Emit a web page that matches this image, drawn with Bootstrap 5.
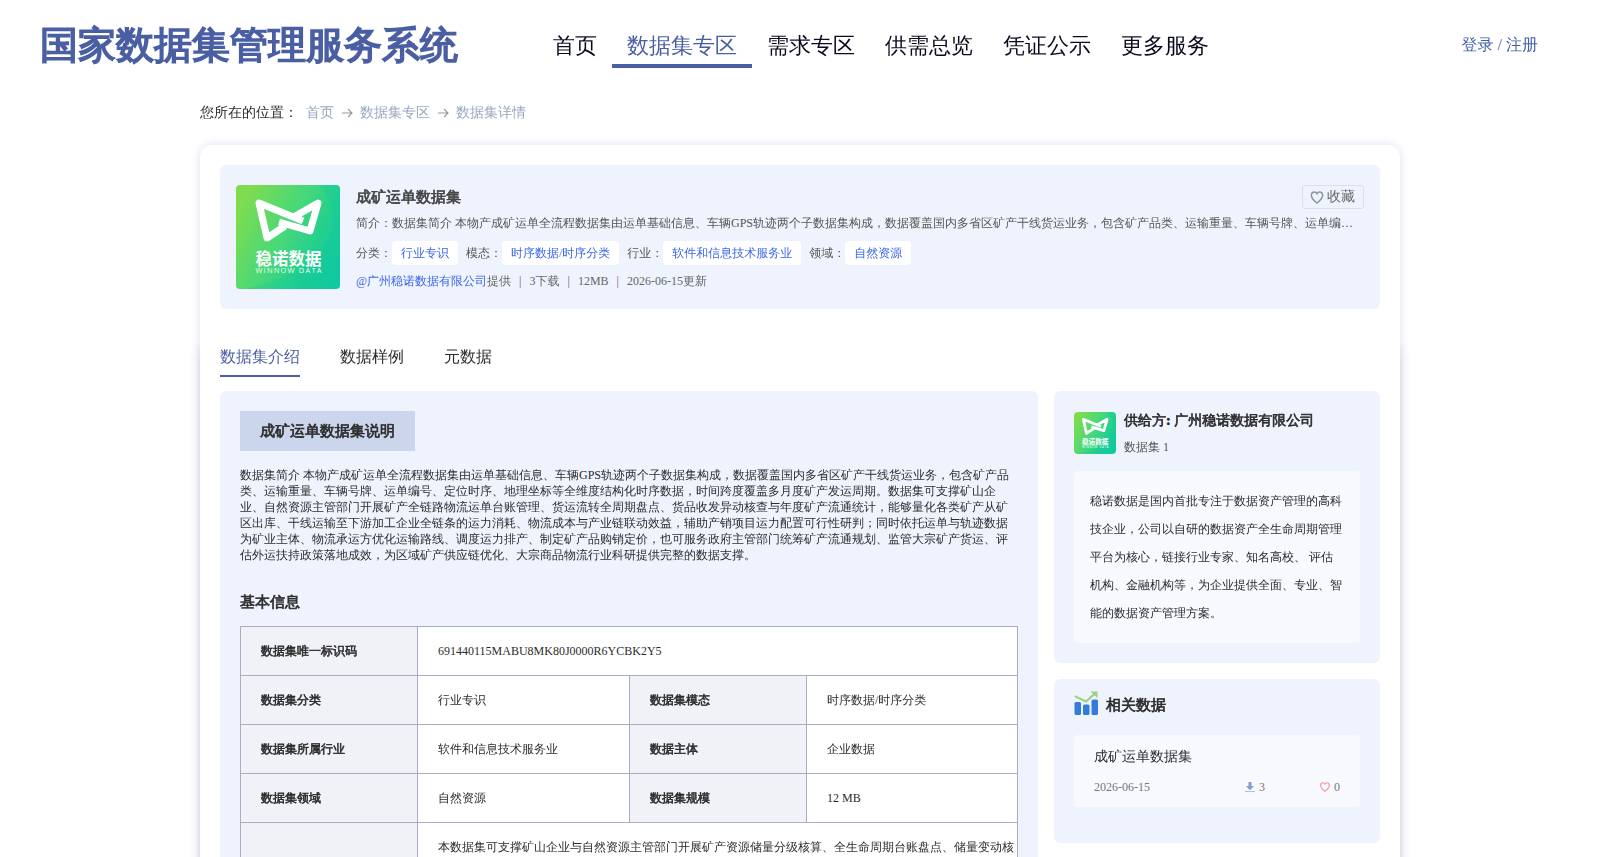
<!DOCTYPE html>
<html lang="zh-CN">
<head>
<meta charset="utf-8">
<meta name="viewport" content="width=device-width, initial-scale=1">
<title>国家数据集管理服务系统</title>
<link href="https://cdn.jsdelivr.net/npm/bootstrap@5.3.0/dist/css/bootstrap.min.css" rel="stylesheet">
<script src="https://cdn.jsdelivr.net/npm/bootstrap@5.3.0/dist/js/bootstrap.bundle.min.js"></script>
<style>
  :root { --brand: #4a5fa3; --panel: #eef3fe; --line: #a8adc4; }
  html, body { height: 100vh; overflow: hidden; }
  body { font-family: "Liberation Serif", "WenQuanYi Zen Hei", "Noto Sans CJK SC", serif; font-size: 12px; line-height: 16px; color: #2c2c2c; background: #fff; }
  a { text-decoration: none; }
  .fw-bold, .info-table th { -webkit-text-stroke: .045em currentColor; }
  .site-head { height: 90px; padding-left: 40px; padding-right: 62px; }
  .site-name { font-size: 38px; line-height: 50px; color: var(--brand); width: 498px; }
  .site-menu .nav-link { font-size: 22px; line-height: 40px; height: 42px; padding: 0 15px; color: #0b0b20; border-bottom: 4px solid transparent; }
  .site-menu .nav-link.active { color: var(--brand); border-color: var(--brand); }
  .sign-in { font-size: 16px; color: #4561a8; }
  .page-wrap { width: 1200px; height: calc(100vh - 90px); }
  .crumbs { height: 55px; padding-bottom: 9px; font-size: 14px; }
  .crumbs a, .crumbs .here { color: #98a7c0; }
  .crumbs svg { margin: 0 7.5px; }
  .sheet { border-radius: 12px; background: #fff; box-shadow: 0 0 10px rgba(80,80,180,.2); padding: 20px 0 0; height: 900px; }
  .sheet-body { margin-top: 20px; padding: 0 20px; height: 800px; box-shadow: 0 20px 10px rgba(80,80,150,.16); clip-path: inset(0 -12px 0 -12px); background: #fff; }
  .panel { background: var(--panel); border-radius: 6px; }
  .summary { margin: 0 20px; height: 144px; padding: 20px 16px; }
  .ds-name { font-size: 15px; line-height: 24px; color: #444; }
  .fav { width: 62px; height: 24px; border: 1px solid #dcdfe9; border-radius: 3px; font-size: 14px; color: #666; gap: 3px; padding-right: 1px; }
  .grey { color: #555; }
  .tagbox { background: #fff; color: #3c66e8; border-radius: 4px; height: 24px; line-height: 24px; padding: 0 9px; margin-right: 8px; }
  .metaline { color: #666; }
  .tabs-row { height: 46px; gap: 40px; padding-top: 8px; }
  .tabs-row a { font-size: 16px; line-height: 20px; height: 40px; padding-top: 10px; color: #2c2c2c; border-bottom: 2px solid transparent; }
  .tabs-row a.active { color: var(--brand); border-color: var(--brand); }
  .main-col { width: 818px; height: 700px; padding: 20px; }
  .side-col { width: 326px; }
  .desc-title { background: #cbd5ec; font-size: 15px; line-height: 40px; padding: 0 20px; }
  .sec-title { font-size: 15px; line-height: 20px; margin: 29px 0 14px; }
  .info-table { width: 778px; table-layout: fixed; border-collapse: collapse; background: #fff; }
  .info-table th, .info-table td { border: 1px solid var(--line); height: 49px; padding: 0 0 0 20px; vertical-align: middle; }
  .info-table th { background: #f1f2f8; font-weight: 700; }
  .info-table tr.tall td { vertical-align: top; padding-top: 16px; height: 120px; }
  .supplier { padding: 20px; height: 272px; }
  .inner { background: #f8f9fe; border-radius: 4px; }
  .about { padding: 16px; line-height: 28px; height: 172px; }
  .related { padding: 12px 20px; height: 164px; }
  .rel-item { padding: 12px 20px; height: 72px; }
  .stats { color: #777; }
</style>
</head>
<body>
<svg class="position-absolute" width="0" height="0" aria-hidden="true">
  <defs>
    <linearGradient id="lg" x1="0" y1="0.25" x2="1" y2="0.75"><stop offset="0" stop-color="#80dc4e"/><stop offset=".45" stop-color="#48d878"/><stop offset=".75" stop-color="#22cf8e"/><stop offset="1" stop-color="#14cb9c"/></linearGradient>
  </defs>
  <symbol id="logo" viewBox="0 0 104 104">
    <rect width="104" height="104" fill="url(#lg)"/>
    <path d="M83 0C112 30 98 87 8 104H104V0z" fill="#00c4ae" opacity=".2"/>
    <path d="M67 36 23 18 31 53 49 41M43 37 74 46 82 18 56 33" fill="none" stroke="#fff" stroke-width="7" stroke-linejoin="round"/>
    <text x="19.500" y="80" font-family="Noto Sans CJK SC, sans-serif" font-weight="700" font-size="16.500" textLength="66" style="-webkit-text-stroke:0" fill="#fff">稳诺数据</text>
    <text x="19.500" y="88" font-family="Open Sans, sans-serif" font-size="7.500" textLength="66" fill="#e9fff4">WINNOW DATA</text>
  </symbol>
  <symbol id="heart" viewBox="0 0 12 12"><path d="M6 11.200C3.500 9 .8 6.900.8 4.200 .8 2.200 2.100.9 3.600.9 4.700.9 5.500 1.500 6 2.400 6.500 1.500 7.300.9 8.400.9 9.900.9 11.200 2.200 11.200 4.200 11.200 6.900 8.500 9 6 11.200z" fill="none" stroke="currentColor" stroke-width="1.400"/></symbol>
  <symbol id="arrow" viewBox="0 0 11 10"><path d="M0 5H10M6 1 10 5 6 9" fill="none" stroke="#999" stroke-width="1.100"/></symbol>
</svg>

<header class="site-head d-flex align-items-center">
  <div class="site-name fw-bold">国家数据集管理服务系统</div>
  <nav class="nav site-menu flex-nowrap flex-grow-1 pt-1">
    <a class="nav-link" href="#">首页</a>
    <a class="nav-link active" href="#">数据集专区</a>
    <a class="nav-link" href="#">需求专区</a>
    <a class="nav-link" href="#">供需总览</a>
    <a class="nav-link" href="#">凭证公示</a>
    <a class="nav-link" href="#">更多服务</a>
  </nav>
  <a class="sign-in" href="#">登录 / 注册</a>
</header>

<div class="page-wrap mx-auto">
  <div class="crumbs d-flex align-items-center">
    <span class="me-2">您所在的位置：</span>
    <a href="#">首页</a>
    <svg width="11" height="10"><use href="#arrow"/></svg>
    <a href="#">数据集专区</a>
    <svg width="11" height="10"><use href="#arrow"/></svg>
    <span class="here">数据集详情</span>
  </div>

  <main class="sheet">
    <section class="summary panel d-flex">
      <svg class="rounded-1 flex-shrink-0 me-3" width="104" height="104"><use href="#logo"/></svg>
      <div class="flex-grow-1 overflow-hidden">
        <div class="d-flex justify-content-between">
          <div class="ds-name fw-bold">成矿运单数据集</div>
          <div class="fav d-flex align-items-center justify-content-center"><svg width="14" height="13" color="#8d93a5"><use href="#heart"/></svg>收藏</div>
        </div>
        <div class="grey text-truncate pe-2" style="margin-top:6px">简介：数据集简介 本物产成矿运单全流程数据集由运单基础信息、车辆GPS轨迹两个子数据集构成，数据覆盖国内多省区矿产干线货运业务，包含矿产品类、运输重量、车辆号牌、运单编号、定位时序</div>
        <div class="d-flex align-items-center grey" style="margin-top:10px">
          分类：<span class="tagbox">行业专识</span>模态：<span class="tagbox">时序数据/时序分类</span>行业：<span class="tagbox">软件和信息技术服务业</span>领域：<span class="tagbox">自然资源</span>
        </div>
        <div class="metaline d-flex mt-2"><a href="#" style="color:#3c66e8">@广州稳诺数据有限公司</a>提供<span class="mx-2">|</span>3下载<span class="mx-2">|</span>12MB<span class="mx-2">|</span>2026-06-15更新</div>
      </div>
    </section>

    <div class="sheet-body">
      <nav class="tabs-row d-flex">
        <a class="active" href="#">数据集介绍</a>
        <a href="#">数据样例</a>
        <a href="#">元数据</a>
      </nav>
      <div class="d-flex gap-3 mt-3">
        <section class="main-col panel">
          <div class="desc-title d-inline-block fw-bold">成矿运单数据集说明</div>
          <p class="mb-0 mt-3">数据集简介 本物产成矿运单全流程数据集由运单基础信息、车辆GPS轨迹两个子数据集构成，数据覆盖国内多省区矿产干线货运业务，包含矿产品<br>类、运输重量、车辆号牌、运单编号、定位时序、地理坐标等全维度结构化时序数据，时间跨度覆盖多月度矿产发运周期。数据集可支撑矿山企<br>业、自然资源主管部门开展矿产全链路物流运单台账管理、货运流转全周期盘点、货品收发异动核查与年度矿产流通统计，能够量化各类矿产从矿<br>区出库、干线运输至下游加工企业全链条的运力消耗、物流成本与产业链联动效益，辅助产销项目运力配置可行性研判；同时依托运单与轨迹数据<br>为矿业主体、物流承运方优化运输路线、调度运力排产、制定矿产品购销定价，也可服务政府主管部门统筹矿产流通规划、监管大宗矿产货运、评<br>估外运扶持政策落地成效，为区域矿产供应链优化、大宗商品物流行业科研提供完整的数据支撑。</p>
          <h2 class="sec-title fw-bold">基本信息</h2>
          <table class="info-table">
            <colgroup><col style="width:177px"><col style="width:212px"><col style="width:177px"><col style="width:211px"></colgroup>
            <tr><th>数据集唯一标识码</th><td colspan="3">691440115MABU8MK80J0000R6YCBK2Y5</td></tr>
            <tr><th>数据集分类</th><td>行业专识</td><th>数据集模态</th><td>时序数据/时序分类</td></tr>
            <tr><th>数据集所属行业</th><td>软件和信息技术服务业</td><th>数据主体</th><td>企业数据</td></tr>
            <tr><th>数据集领域</th><td>自然资源</td><th>数据集规模</th><td>12 MB</td></tr>
            <tr class="tall"><th></th><td colspan="3">本数据集可支撑矿山企业与自然资源主管部门开展矿产资源储量分级核算、全生命周期台账盘点、储量变动核</td></tr>
          </table>
        </section>
        <aside class="side-col d-flex flex-column gap-3">
          <section class="supplier panel">
            <div class="d-flex gap-2">
              <svg class="rounded-1" width="42" height="42" style="margin-top:1px"><use href="#logo"/></svg>
              <div>
                <div class="fw-bold" style="font-size:14px;line-height:20px">供给方: 广州稳诺数据有限公司</div>
                <div class="grey" style="margin-top:8px">数据集 1</div>
              </div>
            </div>
            <div class="inner about" style="margin-top:16px">稳诺数据是国内首批专注于数据资产管理的高科<br>技企业，公司以自研的数据资产全生命周期管理<br>平台为核心，链接行业专家、知名高校、 评估<br>机构、金融机构等，为企业提供全面、专业、智<br>能的数据资产管理方案。</div>
          </section>
          <section class="related panel">
            <div class="d-flex gap-2">
              <svg width="24" height="24" viewBox="0 0 24 24"><g fill="#327bd9"><rect x=".5" y="11" width="6.500" height="13" rx="1.500"/><rect x="9" y="13.500" width="6.500" height="10.500" rx="1.500"/><rect x="17.500" y="8.500" width="6.500" height="15.500" rx="1.500"/></g><path d="M.8 5.200 12 10.500 21.500 2" fill="none" stroke="#9bd27e" stroke-width="2"/><path d="M16.500.5H23.500V7.200z" fill="#9bd27e"/></svg>
              <div class="fw-bold" style="font-size:15px;line-height:28px">相关数据</div>
            </div>
            <div class="inner rel-item" style="margin-top:16px">
              <div style="font-size:14px;line-height:20px">成矿运单数据集</div>
              <div class="stats d-flex align-items-center" style="margin-top:12px">
                <span class="flex-grow-1">2026-06-15</span>
                <svg class="me-1" width="10" height="10" viewBox="0 0 10 10"><path d="M3.500 0H6.500V4H9L5 8.300 1 4H3.500z" fill="#839dcd"/><path d="M0 9.500H10" stroke="#aebfdf"/></svg><span style="width:61px">3</span>
                <svg class="me-1" width="10" height="10" color="#f3959a"><use href="#heart"/></svg>0
              </div>
            </div>
          </section>
          <section class="panel" style="height:100px"></section>
        </aside>
      </div>
    </div>
  </main>
</div>
</body>
</html>
